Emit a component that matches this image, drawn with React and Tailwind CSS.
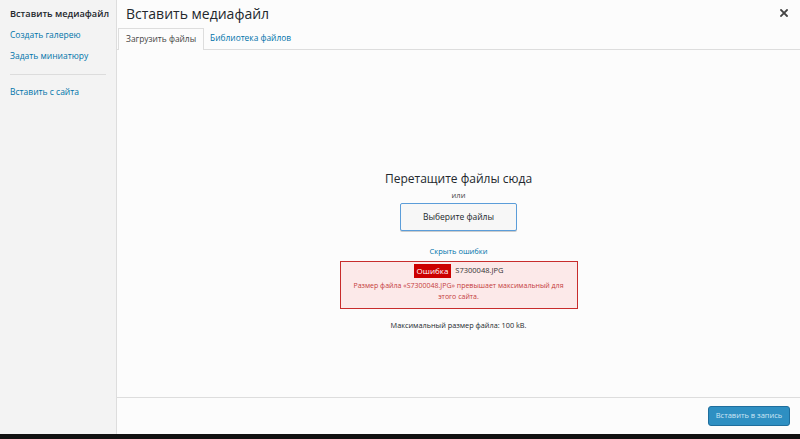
import React from "react";

export default function App() {
  return (
    <div
      className="w-[800px] h-[439px] flex flex-col bg-[#fcfcfc] text-[#32373c] overflow-hidden"
      style={{ fontFamily: '"Open Sans", "Noto Sans", sans-serif' }}
    >
      <div className="flex flex-1 min-h-0">
        {/* sidebar */}
        <div className="w-[117px] shrink-0 bg-[#f3f3f3] border-r border-[#dddddd] flex flex-col pt-[7px]">
          <div className="px-[10px] text-[9.2px] leading-[14px] font-semibold text-[#23282d] whitespace-nowrap">Вставить медиафайл</div>
          <div className="px-[10px] mt-[7px] text-[8.5px] leading-[14px] text-[#0073aa]">Создать галерею</div>
          <div className="px-[10px] mt-[7px] text-[8.5px] leading-[14px] text-[#0073aa]">Задать миниатюру</div>
          <div className="mx-[10px] mt-[11px] border-t border-[#dcdcdc]"></div>
          <div className="px-[10px] mt-[10px] text-[8.5px] leading-[14px] text-[#0073aa]">Вставить с сайта</div>
        </div>
        {/* main */}
        <div className="flex-1 flex flex-col min-w-0">
          <div className="h-[28px] flex items-center justify-between pl-[9px] pr-[12px]">
            <div className="text-[14px] leading-[20px] text-[#23282d] -mt-[1px]">Вставить медиафайл</div>
            <svg width="8" height="8" viewBox="0 0 8 8" className="-mt-[3px]">
              <path d="M1 1 L7 7 M7 1 L1 7" stroke="#444" strokeWidth="1.8" strokeLinecap="square" />
            </svg>
          </div>
          <div className="h-[22px] flex items-end border-b border-[#dddddd] pl-[1px]">
            <div className="h-[22px] px-[7px] flex items-center border border-b-0 border-[#dddddd] bg-[#fcfcfc] text-[8.4px] text-[#444] -mb-[1px] pb-[1px]">
              Загрузить файлы
            </div>
            <div className="h-[22px] px-[6px] flex items-center text-[8.4px] text-[#0073aa]">Библиотека файлов</div>
          </div>
          <div className="flex-1 flex flex-col items-center pt-[120px]">
            <div className="text-[12px] leading-[17px] text-[#23282d]">Перетащите файлы сюда</div>
            <div className="text-[7.5px] leading-[10px] mt-[3px] text-[#444]">или</div>
            <div className="mt-[3px] w-[117px] h-[28px] flex items-center justify-center border border-[#5b9dd9] rounded-[2px] bg-[#f7f7f7] shadow-[0_1px_0_#ccc] text-[8.5px] text-[#23282d]">
              Выберите файлы
            </div>
            <div className="mt-[15px] text-[7.5px] leading-[10px] text-[#0073aa]">Скрыть ошибки</div>
            <div className="mt-[5px] w-[238px] h-[48px] border border-[#c82c2c] bg-[#fce9e9] flex flex-col items-center pt-[2px]">
              <div className="flex items-center gap-[4px]">
                <span className="bg-[#c00] text-white text-[8px] leading-[14px] px-[3px]">Ошибка</span>
                <span className="text-[7.5px] text-[#333]">S7300048.JPG</span>
              </div>
              <div className="text-[7px] leading-[11px] text-[#c43c3c] text-center w-[226px] mt-[2px]">
                Размер файла «S7300048.JPG» превышает максимальный для этого сайта.
              </div>
            </div>
            <div className="mt-[11px] text-[7.3px] leading-[10px] text-[#23282d]">Максимальный размер файла: 100 kB.</div>
          </div>
          <div className="h-[37px] shrink-0 border-t border-[#dddddd] flex items-center justify-end pr-[10px]">
            <div className="h-[20px] w-[82px] rounded-[3px] bg-[#2e8fc2] border border-[#1f6e9d] flex items-center justify-center text-[7.5px] text-[#cfe6f5]">
              Вставить в запись
            </div>
          </div>
        </div>
      </div>
      <div className="h-[5px] bg-[#111] shrink-0"></div>
    </div>
  );
}
